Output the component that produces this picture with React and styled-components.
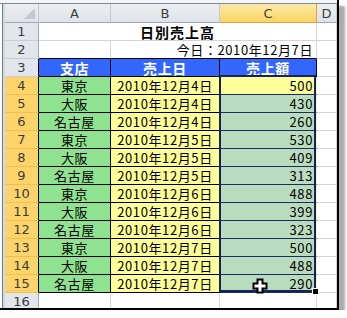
import React from "react";
import styled, { createGlobalStyle } from "styled-components";

const GlobalStyle = createGlobalStyle`
  html, body { margin: 0; padding: 0; background: #fff; }
  body { font-family: "Noto Sans CJK JP", "Noto Sans", sans-serif; }
`;

const Frame = styled.div`
  position: relative;
  width: 337px;
  height: 308px;
  border-right: 2px solid #000;
  border-bottom: 2px solid #000;
  box-shadow: 6px 6px 2px rgba(0, 0, 0, 0.33);
  display: flex;
  flex-direction: column;
  overflow: hidden;
  background: #fff;
`;

const TopBand = styled.div`
  height: 3px;
  flex: none;
  border-bottom: 1px solid #7d8a99;
  background: #f3f5f8;
`;

const Body = styled.div`
  display: flex;
  flex: 1;
  min-height: 0;
`;

const SideStrip = styled.div`
  width: 5px;
  flex: none;
  background: linear-gradient(to right, #fff 0 2px, #6c7b8d 2px 3px, #cddbeb 3px 5px);
`;

const Sheet = styled.div`
  position: relative;
  display: grid;
  grid-template-columns: 34px 72px 109px 97px 20px;
  grid-template-rows: 19px;
  grid-auto-rows: 18px;
  align-content: start;
`;

const Cell = styled.div`
  box-sizing: border-box;
  display: flex;
  align-items: center;
  justify-content: ${(p) => p.$align || "center"};
  padding: ${(p) => (p.$align === "flex-end" ? "0 3px 0 0" : "0")};
  background: ${(p) => p.$bg || "#fff"};
  border-right: 1px solid ${(p) => p.$r || "#d4d4d4"};
  border-bottom: 1px solid ${(p) => p.$b || "#d4d4d4"};
  grid-column: ${(p) => (p.$span ? `span ${p.$span}` : "auto")};
  font-size: ${(p) => p.$size || 13}px;
  font-weight: ${(p) => (p.$bold ? 700 : 400)};
  letter-spacing: ${(p) => p.$ls || 0.6}px;
  color: ${(p) => p.$color || "#000"};
  white-space: nowrap;
  line-height: 1;
  box-shadow: ${(p) => p.$inset || "none"};
`;

const ColHead = styled.div`
  box-sizing: border-box;
  display: flex;
  align-items: center;
  justify-content: center;
  font-family: "DejaVu Sans", "Liberation Sans", sans-serif;
  font-size: 13px;
  color: #3c3c3c;
  background: ${(p) =>
    p.$sel
      ? "linear-gradient(#fde9a8, #fcd462)"
      : "linear-gradient(#eceef1, #dfe3e8)"};
  border-right: 1px solid ${(p) => (p.$sel ? "#d9a443" : "#c3c9d2")};
  border-bottom: 1px solid ${(p) => (p.$sel ? "#e8a13a" : "#9ea8b6")};
`;

const Corner = styled(ColHead)`
  position: relative;
  &::after {
    content: "";
    position: absolute;
    right: 3px;
    bottom: 3px;
    width: 0;
    height: 0;
    border-left: 11px solid transparent;
    border-bottom: 11px solid #c4c8ce;
  }
`;

const RowHead = styled.div`
  box-sizing: border-box;
  display: flex;
  align-items: center;
  justify-content: center;
  font-family: "DejaVu Sans", "Liberation Sans", sans-serif;
  font-size: 13px;
  color: #3c3c3c;
  background: ${(p) => (p.$sel ? "#fdd46a" : "#e2e5ea")};
  border-right: 1px solid ${(p) => (p.$edge ? "#000" : "#9ea8b6")};
  border-bottom: 1px solid ${(p) => (p.$sel ? "#f1bf55" : "#c9ced6")};
`;

const Selection = styled.div`
  position: absolute;
  left: 214px;
  top: 71px;
  width: 97px;
  height: 217px;
  box-sizing: border-box;
  border: 2px solid #18225a;
  pointer-events: none;
`;

const FillHandle = styled.div`
  position: absolute;
  left: 308px;
  top: 285px;
  width: 5px;
  height: 5px;
  background: #000;
  outline: 1px solid #fff;
`;

const Cursor = styled.svg`
  position: absolute;
  left: 248px;
  top: 275px;
  overflow: visible;
`;

const rows = [
  ["東京", "2010年12月4日", "500"],
  ["大阪", "2010年12月4日", "430"],
  ["名古屋", "2010年12月4日", "260"],
  ["東京", "2010年12月5日", "530"],
  ["大阪", "2010年12月5日", "409"],
  ["名古屋", "2010年12月5日", "313"],
  ["東京", "2010年12月6日", "488"],
  ["大阪", "2010年12月6日", "399"],
  ["名古屋", "2010年12月6日", "323"],
  ["東京", "2010年12月7日", "500"],
  ["大阪", "2010年12月7日", "488"],
  ["名古屋", "2010年12月7日", "290"],
];

export default function App() {
  return (
    <>
      <GlobalStyle />
      <Frame>
        <TopBand />
        <Body>
          <SideStrip />
          <Sheet>
            <Corner />
            <ColHead>A</ColHead>
            <ColHead>B</ColHead>
            <ColHead $sel>C</ColHead>
            <ColHead>D</ColHead>

            <RowHead>1</RowHead>
            <Cell $span={3} $bold $size={14} $ls={1}>
              日別売上高
            </Cell>
            <Cell />

            <RowHead>2</RowHead>
            <Cell $b="#000" />
            <Cell $span={2} $align="flex-end" $b="#000">
              今日：2010年12月7日
            </Cell>
            <Cell />

            <RowHead $edge>3</RowHead>
            <Cell $bg="#3366ff" $r="#000" $b="#000" $bold $size={14} $color="#fff">
              支店
            </Cell>
            <Cell $bg="#3366ff" $r="#000" $b="#000" $bold $size={14} $color="#fff">
              売上日
            </Cell>
            <Cell $bg="#3366ff" $r="#000" $b="#000" $bold $size={14} $color="#fff">
              売上額
            </Cell>
            <Cell />

            {rows.map(([shop, date, amt], i) => (
              <React.Fragment key={i}>
                <RowHead $sel $edge>
                  {i + 4}
                </RowHead>
                <Cell $bg="#8fe28f" $r="#000" $b="#000">
                  {shop}
                </Cell>
                <Cell $bg="#ffff99" $r="#000" $b="#000">
                  {date}
                </Cell>
                <Cell
                  $bg={i === 0 ? "#ffff99" : "#b9dcbf"}
                  $r="#f4f4c8"
                  $b="#1c2a66"
                  $align="flex-end"
                  $inset={i === 0 ? "inset 1px 0 0 #fff" : "none"}
                >
                  {amt}
                </Cell>
                <Cell />
              </React.Fragment>
            ))}

            <RowHead>16</RowHead>
            <Cell />
            <Cell />
            <Cell />
            <Cell />

            <Selection />
            <FillHandle />
            <Cursor width="14" height="14" viewBox="0 0 14 14">
              <polygon
                points="4.5,0.5 9.5,0.5 9.5,4.5 13.5,4.5 13.5,9.5 9.5,9.5 9.5,13.5 4.5,13.5 4.5,9.5 0.5,9.5 0.5,4.5 4.5,4.5"
                fill="#fff"
                stroke="#000"
                strokeWidth="2"
                strokeLinejoin="miter"
              />
            </Cursor>
          </Sheet>
        </Body>
      </Frame>
    </>
  );
}
